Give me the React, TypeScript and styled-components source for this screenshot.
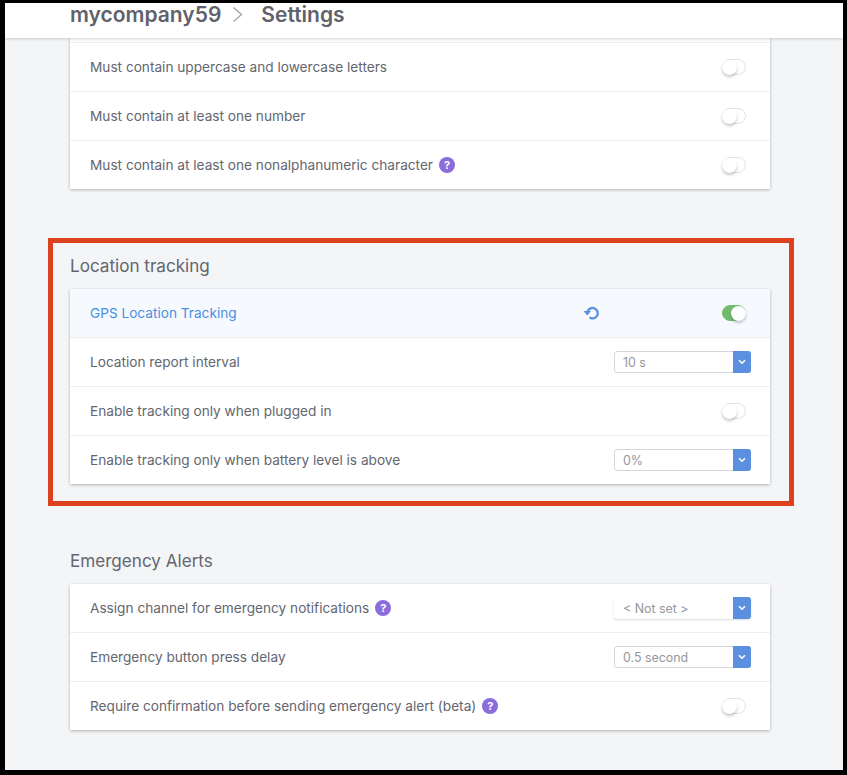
import { createGlobalStyle, styled } from 'styled-components';

const GlobalStyle = createGlobalStyle`
  html, body {
    margin: 0;
    padding: 0;
    background: #000;
  }
`;

const Frame = styled.div`
  width: 847px;
  height: 775px;
  box-sizing: border-box;
  border-style: solid;
  border-color: #000;
  border-width: 3px 4px 5px 5px;
  background: #f4f5f7;
  font-family: Inter, 'Liberation Sans', sans-serif;
  overflow: hidden;
`;

const Header = styled.header`
  height: 35px;
  box-sizing: border-box;
  background: #fff;
  box-shadow: 0 1px 3px rgba(0, 0, 0, 0.18);
  padding: 0 0 13px 65px;
  display: flex;
  align-items: center;
  gap: 10px;
  color: #5f626c;
  font-size: 21px;
  font-weight: 600;
  position: relative;
  z-index: 1;
`;

const Chevron = styled.svg`
  width: 14px;
  height: 17px;
  margin-right: 6px;
  fill: none;
  stroke: #a0a3aa;
  stroke-width: 1.3;
`;

const Main = styled.main`
  display: flex;
  flex-direction: column;
  padding-left: 65px;
`;

const Highlight = styled.section`
  width: 746px;
  height: 268px;
  box-sizing: border-box;
  margin: 49px 0 0 -22px;
  border: 5px solid #dc401e;
  padding: 6px 0 0 17px;
`;

const Plain = styled.section`
  margin-top: 38px;
`;

const SectionTitle = styled.h2`
  margin: 0;
  height: 40px;
  line-height: 33px;
  font-size: 17.1px;
  font-weight: 400;
  color: #63666f;
`;

const Card = styled.div`
  width: 700px;
  background: #fff;
  box-shadow: 0 1px 3px rgba(0, 0, 0, 0.28);
`;

const CutEdge = styled.div`
  height: 4px;
  border-bottom: 1px solid #eceef1;
`;

const Row = styled.div<{ $active?: boolean }>`
  height: 49px;
  box-sizing: border-box;
  padding: 0 19px 0 20px;
  display: flex;
  align-items: center;
  font-size: 13.65px;
  background: ${(p) => (p.$active ? '#f6f9fe' : '#fff')};
  color: ${(p) => (p.$active ? '#4a90e2' : '#63666f')};
  border-bottom: 1px solid #eceef1;
  &:last-child {
    border-bottom: none;
    height: 48px;
  }
`;

const Label = styled.span`
  flex: 1;
  display: flex;
  align-items: center;
  gap: 6px;
  margin-top: -1px;
`;

const Help = styled.span`
  width: 16px;
  height: 16px;
  border-radius: 50%;
  background: #8a6cdc;
  color: #fff;
  font-size: 11px;
  font-weight: 700;
  display: flex;
  align-items: center;
  justify-content: center;
`;

const ResetIcon = styled.svg`
  width: 16px;
  height: 15px;
  margin: -2px 123px 0 0;
  fill: none;
  stroke: #5b8fdf;
  stroke-width: 2.3;
`;

const Switch = styled.span<{ $on?: boolean }>`
  width: 24px;
  height: 16px;
  margin-right: 5px;
  border-radius: 8px;
  box-sizing: border-box;
  background: ${(p) => (p.$on ? '#72bb6d' : '#fff')};
  border: 1px solid ${(p) => (p.$on ? '#72bb6d' : '#e2e3e6')};
  display: flex;
  justify-content: ${(p) => (p.$on ? 'flex-end' : 'flex-start')};
  align-items: center;
`;

const Knob = styled.span`
  width: 15px;
  height: 15px;
  margin: -1px;
  flex: none;
  border-radius: 50%;
  background: #fff;
  box-shadow: 0 2px 3px rgba(0, 0, 0, 0.22);
`;

const Select = styled.div<{ $empty?: boolean }>`
  width: 137px;
  height: 22px;
  box-sizing: border-box;
  display: flex;
  align-items: stretch;
  border-radius: 3px;
  background: #fff;
  border: 1px solid ${(p) => (p.$empty ? 'transparent' : '#d6d7db')};
  box-shadow: ${(p) => (p.$empty ? '0 1px 2px rgba(0, 0, 0, 0.15)' : 'none')};
  font-size: 12.4px;
  color: #94969e;
`;

const SelectValue = styled.span`
  flex: 1;
  padding-left: 8px;
  line-height: 22px;
`;

const SelectArrow = styled.span`
  width: 18px;
  margin: -1px;
  background: #5b8fdf;
  border-radius: 0 3px 3px 0;
  display: flex;
  align-items: center;
  justify-content: center;
`;

const ArrowIcon = styled.svg`
  width: 8px;
  height: 6px;
  fill: none;
  stroke: #fff;
  stroke-width: 1.6;
`;

const Toggle = ({ on }: { on?: boolean }) => (
  <Switch $on={on}>
    <Knob />
  </Switch>
);

const Dropdown = ({ value, empty }: { value: string; empty?: boolean }) => (
  <Select $empty={empty}>
    <SelectValue>{value}</SelectValue>
    <SelectArrow>
      <ArrowIcon viewBox="0 0 8 6">
        <path d="M1 1.2 L4 4.2 L7 1.2" />
      </ArrowIcon>
    </SelectArrow>
  </Select>
);

export default function App() {
  return (
    <Frame>
      <GlobalStyle />
      <Header>
        <span>mycompany59</span>
        <Chevron viewBox="0 0 14 17">
          <path d="M2.5 1.5 L10.5 8.5 L2.5 15.5" />
        </Chevron>
        <span>Settings</span>
      </Header>
      <Main>
        <Card>
          <CutEdge />
          <Row>
            <Label>Must contain uppercase and lowercase letters</Label>
            <Toggle />
          </Row>
          <Row>
            <Label>Must contain at least one number</Label>
            <Toggle />
          </Row>
          <Row>
            <Label>
              Must contain at least one nonalphanumeric character <Help>?</Help>
            </Label>
            <Toggle />
          </Row>
        </Card>

        <Highlight>
          <SectionTitle>Location tracking</SectionTitle>
          <Card>
            <Row $active>
              <Label>GPS Location Tracking</Label>
              <ResetIcon viewBox="0 0 16 15">
                <path d="M4.6 6.5 A5.2 5.2 0 1 1 6.5 12.4" />
                <path d="M0.5 6 H8 L4.3 10.6 Z" fill="#5b8fdf" stroke="none" />
              </ResetIcon>
              <Toggle on />
            </Row>
            <Row>
              <Label>Location report interval</Label>
              <Dropdown value="10 s" />
            </Row>
            <Row>
              <Label>Enable tracking only when plugged in</Label>
              <Toggle />
            </Row>
            <Row>
              <Label>Enable tracking only when battery level is above</Label>
              <Dropdown value="0%" />
            </Row>
          </Card>
        </Highlight>

        <Plain>
          <SectionTitle>Emergency Alerts</SectionTitle>
          <Card>
            <Row>
              <Label>
                Assign channel for emergency notifications <Help>?</Help>
              </Label>
              <Dropdown value="< Not set >" empty />
            </Row>
            <Row>
              <Label>Emergency button press delay</Label>
              <Dropdown value="0.5 second" />
            </Row>
            <Row>
              <Label>
                Require confirmation before sending emergency alert (beta) <Help>?</Help>
              </Label>
              <Toggle />
            </Row>
          </Card>
        </Plain>
      </Main>
    </Frame>
  );
}
